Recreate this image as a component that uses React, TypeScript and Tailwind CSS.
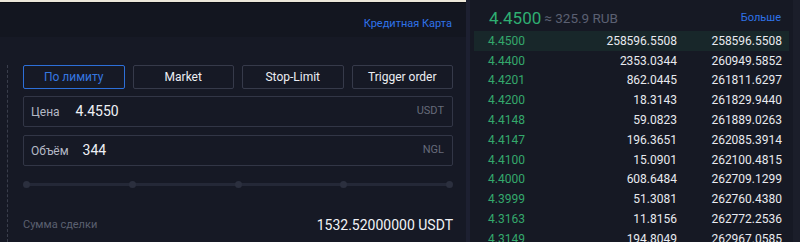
import React from "react";

const tabs = ["По лимиту", "Market", "Stop-Limit", "Trigger order"];

const rows: [string, string, string][] = [
  ["4.4500", "258596.5508", "258596.5508"],
  ["4.4400", "2353.0344", "260949.5852"],
  ["4.4201", "862.0445", "261811.6297"],
  ["4.4200", "18.3143", "261829.9440"],
  ["4.4148", "59.0823", "261889.0263"],
  ["4.4147", "196.3651", "262085.3914"],
  ["4.4100", "15.0901", "262100.4815"],
  ["4.4000", "608.6484", "262709.1299"],
  ["4.3999", "51.3081", "262760.4380"],
  ["4.3163", "11.8156", "262772.2536"],
  ["4.3149", "194.8049", "262967.0585"],
];

function Field({ label, value, unit, valueIndent }: { label: string; value: string; unit: string; valueIndent: string }) {
  return (
    <div className="flex h-[31px] items-center rounded-[2px] border border-[#323646] pl-[7px] pr-[8px]">
      <span className="text-[12px] text-[#b4b8c4]">{label}</span>
      <span className={`${valueIndent} text-[14px] text-[#eef0f5]`}>{value}</span>
      <span className="ml-auto text-[11px] text-[#666b7a]">{unit}</span>
    </div>
  );
}

export default function App() {
  return (
    <div className="flex h-[242px] w-[800px] overflow-hidden bg-[#0f1119] font-['Roboto',sans-serif]">
      {/* order form */}
      <div className="flex w-[466px] flex-col border-t-[2px] border-[#ece7da] bg-[#161925]">
        <div className="flex h-[35px] shrink-0 items-center justify-end border-t border-[#0b0d14] bg-[#131620] pr-[14px] pt-[8px]">
          <span className="text-[11px] text-[#2f72e8]">Кредитная Карта</span>
        </div>
        <div className="flex flex-1">
          <div className="ml-[7px] mt-[28px] border-l border-dashed border-[#3a3e4c]" />
          <div className="ml-[15px] mt-[28px] w-[430px]">
            <div className="flex gap-[8px]">
              {tabs.map((t, i) => (
                <div
                  key={t}
                  className={`flex h-[24px] flex-1 items-center justify-center rounded-[2px] border text-[12px] ${
                    i === 0 ? "border-[#2d6fd8] text-[#3577e0]" : "border-[#363a4a] text-[#eceef3]"
                  }`}
                >
                  {t}
                </div>
              ))}
            </div>
            <div className="mt-[7px] flex flex-col gap-[8px]">
              <Field label="Цена" value="4.4550" unit="USDT" valueIndent="ml-[16px]" />
              <Field label="Объём" value="344" unit="NGL" valueIndent="ml-[14px]" />
            </div>
            <div className="relative mt-[14px] flex h-[8px] items-center px-[1px]">
              <div className="h-[3px] w-full rounded-full bg-[#242837]" />
              <div className="absolute inset-0 flex items-center justify-between">
                {[0, 1, 2, 3, 4].map((d) => (
                  <span key={d} className="h-[7px] w-[7px] rounded-full bg-[#2b2f3e]" />
                ))}
              </div>
            </div>
            <div className="mt-[27px] flex items-center justify-between">
              <span className="text-[11px] text-[#5b6070]">Сумма сделки</span>
              <span className="text-[14px] text-[#f1f2f6]">1532.52000000 USDT</span>
            </div>
          </div>
        </div>
      </div>

      {/* divider */}
      <div className="w-[4px] bg-[#1d2031]" />

      {/* order book */}
      <div className="flex w-[323px] flex-col bg-[#161924]">
        <div className="flex h-[31px] shrink-0 items-center pl-[19px] pr-[12px] pt-[6px]">
          <span className="text-[17px] text-[#2fae72]">4.4500</span>
          <span className="ml-[3px] text-[13.5px] text-[#5b6072]">≈ 325.9 RUB</span>
          <span className="ml-auto text-[11px] text-[#2f72e8]">Больше</span>
        </div>
        <div className="flex flex-col">
          {rows.map(([p, a, t], i) => (
            <div
              key={p}
              className={`mx-[4px] flex h-[19.8px] shrink-0 items-center text-[12px] ${i === 0 ? "bg-[#18272a]" : ""}`}
            >
              <span className="w-[104px] pl-[14px] text-[#34a86c]">{p}</span>
              <span className="w-[99px] text-right text-[#e8eaef]">{a}</span>
              <span className="w-[105px] text-right text-[#e8eaef]">{t}</span>
            </div>
          ))}
        </div>
      </div>
      <div className="flex-1 bg-[#1b1e2a]" />
    </div>
  );
}
